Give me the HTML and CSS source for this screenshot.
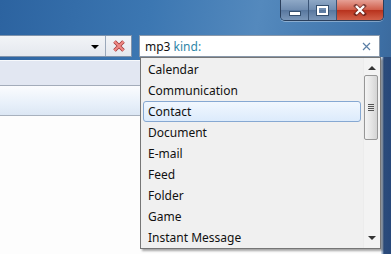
FILE: index.html
```html
<!DOCTYPE html>
<html lang="en">

<head>
  <meta charset="UTF-8">
  <meta name="viewport" content="width=device-width, initial-scale=1.0">
  <title>Search Kind</title>
  <link rel="stylesheet" href="styles.css">
</head>

<body>

  <div class="window">
    <div class="titlebar">
      <div class="caption-buttons">
        <div class="cap-btn minimize"><span class="min-glyph"></span></div>
        <div class="cap-btn maximize"><span class="max-glyph"></span></div>
        <div class="cap-btn close">
          <svg width="14" height="12" viewBox="0 0 14 12">
            <path d="M3 2 L11 10 M11 2 L3 10" stroke="#3a1010" stroke-width="4" stroke-linecap="square" opacity="0.55"/>
            <path d="M3 2 L11 10 M11 2 L3 10" stroke="#fff" stroke-width="2.4"/>
          </svg>
        </div>
      </div>
    </div>

    <div class="navbar">
      <div class="address">
        <div class="address-field"></div>
        <div class="dropdown-arrow"></div>
        <div class="stop-btn">
          <svg width="14" height="14" viewBox="0 0 14 14">
            <path d="M2.5 2.5 L11.5 11.5 M11.5 2.5 L2.5 11.5" stroke="#a33a3a" stroke-width="3.6"/>
            <path d="M2.5 2.5 L11.5 11.5 M11.5 2.5 L2.5 11.5" stroke="#f08a86" stroke-width="2"/>
          </svg>
        </div>
      </div>
      <div class="search">
        <span class="query">mp3 <span class="keyword">kind:</span></span>
        <svg class="clear" width="9" height="9" viewBox="0 0 9 9">
          <path d="M1 1 L8 8 M8 1 L1 8" stroke="#5b7fa6" stroke-width="1.2"/>
        </svg>
      </div>
    </div>

    <div class="main">
      <div class="content">
        <div class="menu-strip"></div>
        <div class="header-strip"></div>
        <div class="pane"></div>
      </div>
      <div class="frame-right"></div>
    </div>

    <div class="popup">
      <ul class="kind-list">
        <li>Calendar</li>
        <li>Communication</li>
        <li class="selected">Contact</li>
        <li>Document</li>
        <li>E-mail</li>
        <li>Feed</li>
        <li>Folder</li>
        <li>Game</li>
        <li>Instant Message</li>
      </ul>
      <div class="scrollbar">
        <div class="arrow up"></div>
        <div class="thumb">
          <span class="grip"></span>
        </div>
        <div class="track"></div>
        <div class="arrow down"></div>
      </div>
    </div>
  </div>

</body>

</html>
```

FILE: styles.css
```css
body {
  margin: 0;
  font-family: 'Noto Sans', 'Open Sans', sans-serif;
  font-size: 12px;
  overflow: hidden;
}

.window {
  position: relative;
  width: 391px;
  height: 254px;
  display: flex;
  flex-direction: column;
  background: linear-gradient(100deg, #2c63a0 0%, #3c77b2 35%, #5489bd 60%, #3f74ab 85%, #375f8f 100%);
}

.titlebar {
  height: 35px;
  display: flex;
  justify-content: flex-end;
  align-items: flex-start;
  padding-right: 7px;
}

.caption-buttons {
  display: flex;
  height: 20px;
  border: 1px solid #2a3f5c;
  border-top: none;
  border-radius: 0 0 5px 5px;
  overflow: hidden;
  box-shadow: 0 1px 0 rgba(255, 255, 255, 0.35);
}

.cap-btn {
  height: 20px;
  display: flex;
  align-items: center;
  justify-content: center;
}

.minimize, .maximize {
  width: 27px;
  background: linear-gradient(#8ea8c6, #6f8cb0 50%, #58779e 51%, #7a96b8);
  border-right: 1px solid #3b5577;
}

.close {
  width: 46px;
  background: linear-gradient(#e6a095, #cf5c48 50%, #b8321d 51%, #d2614a);
}

.min-glyph {
  width: 10px;
  height: 3px;
  margin-top: 6px;
  background: #fff;
  border: 1px solid #35506f;
}

.max-glyph {
  width: 7px;
  height: 5px;
  border: 2px solid #fff;
  outline: 1px solid #35506f;
}

.navbar {
  height: 22px;
  display: flex;
  gap: 7px;
}

.address {
  width: 131px;
  display: flex;
  border: 1px solid #7f93ab;
  border-left: none;
  background: linear-gradient(#f2f4f7, #e4e8ee);
}

.address-field {
  flex: 1;
}

.dropdown-arrow {
  width: 0;
  height: 0;
  margin: 9px 6px 0 0;
  border-left: 4px solid transparent;
  border-right: 4px solid transparent;
  border-top: 4px solid #000;
}

.stop-btn {
  width: 25px;
  display: flex;
  align-items: center;
  justify-content: center;
  border-left: 1px solid #9aa8ba;
}

.search {
  width: 241px;
  display: flex;
  align-items: center;
  justify-content: space-between;
  padding: 0 8px 0 5px;
  box-sizing: border-box;
  background: #fff;
  border: 1px solid #8a99ab;
}

.query {
  color: #111;
}

.keyword {
  color: #2f86a8;
}

.main {
  flex: 1;
  display: flex;
}

.content {
  flex: 1;
  display: flex;
  flex-direction: column;
  padding-top: 3px;
}

.menu-strip {
  height: 24px;
  background: #e2e7f2;
  border-top: 1px solid #f7f9fc;
  border-bottom: 1px solid #a3acba;
}

.header-strip {
  height: 29px;
  background: linear-gradient(#fbfcfe, #e8f0fa 60%, #dce7f4);
  border-bottom: 1px solid #a8b1be;
}

.pane {
  flex: 1;
  background: #fdfdfd;
}

.frame-right {
  width: 10px;
  background: linear-gradient(90deg, #c9d6e6 0, #c9d6e6 1px, #6d86a8 2px, #2c4c7b 3px, #27487a 100%);
}

/* search suggestion dropdown */
.popup {
  position: absolute;
  left: 140px;
  top: 57px;
  width: 239px;
  height: 190px;
  display: flex;
  background: #f0f0f0;
  border: 1px solid #767676;
  box-shadow: 2px 2px 2px rgba(0, 0, 0, 0.35);
}

.kind-list {
  list-style: none;
  margin: 0;
  padding: 1px 0 0 2px;
  flex: 1;
}

.kind-list li {
  height: 21px;
  line-height: 20px;
  padding-left: 4px;
  color: #111;
  border: 1px solid transparent;
  box-sizing: border-box;
  border-radius: 3px;
  margin-right: 2px;
}

.kind-list li.selected {
  background: linear-gradient(#f1f7fe, #dcebfc);
  border-color: #86a8d2;
}

.scrollbar {
  width: 16px;
  display: flex;
  flex-direction: column;
  background: #f3f3f3;
  border-left: 1px solid #ececec;
}

.arrow {
  height: 17px;
  display: flex;
  justify-content: center;
}

.arrow::after {
  content: "";
  width: 0;
  height: 0;
  border-left: 4px solid transparent;
  border-right: 4px solid transparent;
}

.arrow.up::after {
  margin-top: 8px;
  border-bottom: 4px solid #333;
}

.arrow.down::after {
  margin-top: 5px;
  border-top: 4px solid #333;
}

.thumb {
  height: 63px;
  margin-right: 2px;
  display: flex;
  align-items: center;
  justify-content: center;
  background: linear-gradient(90deg, #f4f4f4, #e6e6e6 50%, #d4d4d4);
  border: 1px solid #979797;
  border-radius: 2px;
}

.grip {
  width: 6px;
  height: 7px;
  background: repeating-linear-gradient(#555 0, #555 1px, transparent 1px, transparent 2px);
}

.track {
  flex: 1;
}
```
